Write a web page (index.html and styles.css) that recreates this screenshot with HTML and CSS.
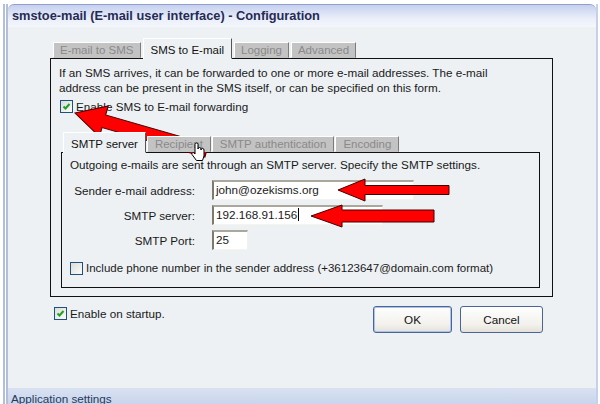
FILE: index.html
```html
<!DOCTYPE html>
<html lang="en">
<head>
    <meta charset="UTF-8">
    <meta name="viewport" content="width=device-width, initial-scale=1.0">
    <title>smstoe-mail - Configuration</title>
    <link rel="stylesheet" href="styles.css">
</head>
<body>
    <div class="window">
        <div class="titlebar">smstoe-mail (E-mail user interface) - Configuration</div>
        <div class="client">
            <div class="tabs outer-tabs">
                <span class="tab">E-mail to SMS</span>
                <span class="tab active">SMS to E-mail</span>
                <span class="tab">Logging</span>
                <span class="tab">Advanced</span>
            </div>
            <div class="panel outer-panel">
                <p class="intro">If an SMS arrives, it can be forwarded to one or more e-mail addresses. The e-mail<br>address can be present in the SMS itself, or can be specified on this form.</p>
                <div class="check">
                    <span class="box"><svg viewBox="0 0 11 11"><path d="M2.5 5.5 L4.5 7.5 L8.5 3" /></svg></span>
                    Enable SMS to E-mail forwarding
                </div>

                <div class="tabs inner-tabs">
                    <span class="tab active">SMTP server</span>
                    <span class="tab">Recipient</span>
                    <span class="tab">SMTP authentication</span>
                    <span class="tab">Encoding</span>
                </div>
                <div class="panel inner-panel">
                    <p class="intro">Outgoing e-mails are sent through an SMTP server. Specify the SMTP settings.</p>
                    <div class="form">
                        <span class="label">Sender e-mail address:</span>
                        <span class="field w1">john@ozekisms.org</span>
                        <span class="label">SMTP server:</span>
                        <span class="field w2">192.168.91.156<span class="caret"></span></span>
                        <span class="label">SMTP Port:</span>
                        <span class="field w3">25</span>
                    </div>
                    <div class="check phone">
                        <span class="box empty"></span>
                        Include phone number in the sender address (+36123647@domain.com format)
                    </div>
                </div>
            </div>

            <div class="footer">
                <div class="check">
                    <span class="box"><svg viewBox="0 0 11 11"><path d="M2.5 5.5 L4.5 7.5 L8.5 3" /></svg></span>
                    Enable on startup.
                </div>
                <div class="buttons">
                    <button class="btn default">OK</button>
                    <button class="btn">Cancel</button>
                </div>
            </div>
        </div>
        <div class="statusbar">Application settings</div>
    </div>

    <!-- red arrows drawn over the screenshot -->
    <svg class="overlay" width="600" height="404" viewBox="0 0 600 404">
        <polygon class="arrow" transform="translate(75,113) rotate(16)" points="0,0 30,-16 30,-6.5 137,-6.5 137,6.5 30,6.5 30,16" />
        <polygon class="arrow" points="338,190 365,179 365,185.5 449,185.5 449,194.5 365,194.5 365,201" />
        <polygon class="arrow" points="311,216 342,205 342,210 434,210 434,222 342,222 342,227" />
    </svg>
    <svg class="cursor" width="16" height="20" viewBox="0 0 16 20">
        <path d="M5 9 V2.5 a1.5 1.5 0 0 1 3 0 V7 a1.5 1.5 0 0 1 3 0 V8 a1.5 1.5 0 0 1 3 0 V14 L12.5 18.5 H6.5 L2 12.5 a1.3 1.3 0 0 1 2 -1.6 L5 12 Z" />
    </svg>
</body>
</html>
```

FILE: styles.css
```css
* {
    box-sizing: border-box;
}
body {
    margin: 0;
    width: 600px;
    height: 404px;
    overflow: hidden;
    position: relative;
    background: #fff;
    font-family: "Liberation Sans", Arial, sans-serif;
    font-size: 11.7px;
    color: #1a1a1a;
}
.window {
    margin: 4px 0 0 3px;
    width: 595px;
    height: 400px;
    border-left: 5px double #b3bedb;
    border-right: 2px solid #c6d0e8;
    display: flex;
    flex-direction: column;
}
.titlebar {
    height: 23px;
    line-height: 22px;
    padding-left: 4px;
    border-top: 1px solid #8fa1cb;
    border-radius: 6px 6px 0 0;
    background: linear-gradient(#c5d0ee, #e9eef9 60%, #f4f7fc);
    font-size: 12.8px;
    font-weight: bold;
    color: #262a55;
}
.client {
    height: 361px;
    padding: 11px 0 0 42px;
    background: #edf1f4;
}
.tabs {
    display: flex;
    align-items: flex-end;
    height: 20px;
    padding-left: 3px;
    position: relative;
    z-index: 1;
}
.tab {
    height: 16px;
    line-height: 15px;
    padding: 0 6px;
    margin-right: 2px;
    background: #c3c3c3;
    color: #8a8a8a;
    border: 1px solid;
    border-color: #fff #7c7c7c #c3c3c3 #fff;
    font-size: 11.5px;
    white-space: nowrap;
}
.tab.active {
    height: 21px;
    margin-bottom: -1px;
    padding: 3px 7px 0;
    line-height: 16px;
    background: #edf1f4;
    color: #111;
    border-color: #fff #555 #edf1f4 #fff;
}
.panel {
    border: 1px solid #111;
}
.outer-panel {
    width: 503px;
    height: 239px;
    padding: 6px 8px 0 8px;
}
.intro {
    margin: 0;
    line-height: 15px;
    white-space: nowrap;
}
.check {
    display: flex;
    align-items: center;
    gap: 3px;
    line-height: 15px;
    white-space: nowrap;
}
.outer-panel > .check {
    margin-top: 4px;
    margin-left: 1px;
}
.box {
    width: 13px;
    height: 13px;
    border: 1px solid #1c5180;
    background: linear-gradient(135deg, #dcdcd7, #fbfbf9);
    display: flex;
}
.box svg {
    width: 11px;
    height: 11px;
}
.box path {
    fill: none;
    stroke: #21a121;
    stroke-width: 2;
}
.inner-tabs {
    margin: 18px 0 0 2px;
    padding-left: 2px;
}
.inner-tabs .tab {
    margin-right: 1px;
    padding: 0 7px;
}
.inner-tabs .tab.active {
    padding: 3px 7px 0;
}
.inner-panel {
    margin-left: 2px;
    width: 479px;
    height: 136px;
    padding: 4px 8px 0 8px;
}
.form {
    display: grid;
    grid-template-columns: 125px auto;
    column-gap: 17px;
    row-gap: 5px;
    align-items: center;
    margin-top: 8px;
}
.label {
    text-align: right;
}
.field {
    height: 20px;
    padding-left: 2px;
    line-height: 16px;
    border-style: solid;
    border-width: 2px 1px 1px 2px;
    border-color: #aaa79c #f2f1ea #f5f5f0 #7d7a70;
    background: #fff;
    justify-self: start;
}
.w1 { width: 202px; }
.w2 { width: 171px; }
.w3 { width: 36px; }
.caret {
    display: inline-block;
    width: 1px;
    height: 13px;
    margin-left: 1px;
    vertical-align: -2px;
    background: #000;
}
.check.phone {
    margin-top: 11px;
    font-size: 11.5px;
}
.footer {
    width: 503px;
    margin-top: 9px;
    padding: 0 10px 0 4px;
    display: flex;
    align-items: flex-start;
}
.buttons {
    margin-left: auto;
    display: flex;
    gap: 8px;
}
.btn {
    width: 79px;
    height: 27px;
    padding: 0;
    border: 1px solid #4a6594;
    border-radius: 3px;
    background: linear-gradient(#fefefe, #f2f1ec 70%, #e3e1d8);
    font-family: "Liberation Sans", Arial, sans-serif;
    font-size: 11.7px;
    color: #111;
}
.btn + .btn {
    width: 83px;
}
.btn.default {
    box-shadow: inset 0 0 0 1px #a9c3ec;
}
.statusbar {
    height: 16px;
    line-height: 22px;
    padding-left: 3px;
    background: linear-gradient(#d9e2f2, #c9d5ec);
    color: #27385c;
    font-size: 11.7px;
    overflow: hidden;
}
.overlay {
    position: absolute;
    left: 0;
    top: 0;
    pointer-events: none;
}
.arrow {
    fill: #ff0000;
    stroke: #400;
    stroke-width: 1;
}
.cursor {
    position: absolute;
    left: 190px;
    top: 142px;
    z-index: 2;
}
.cursor path {
    fill: #fff;
    stroke: #000;
    stroke-width: 1;
}
```
